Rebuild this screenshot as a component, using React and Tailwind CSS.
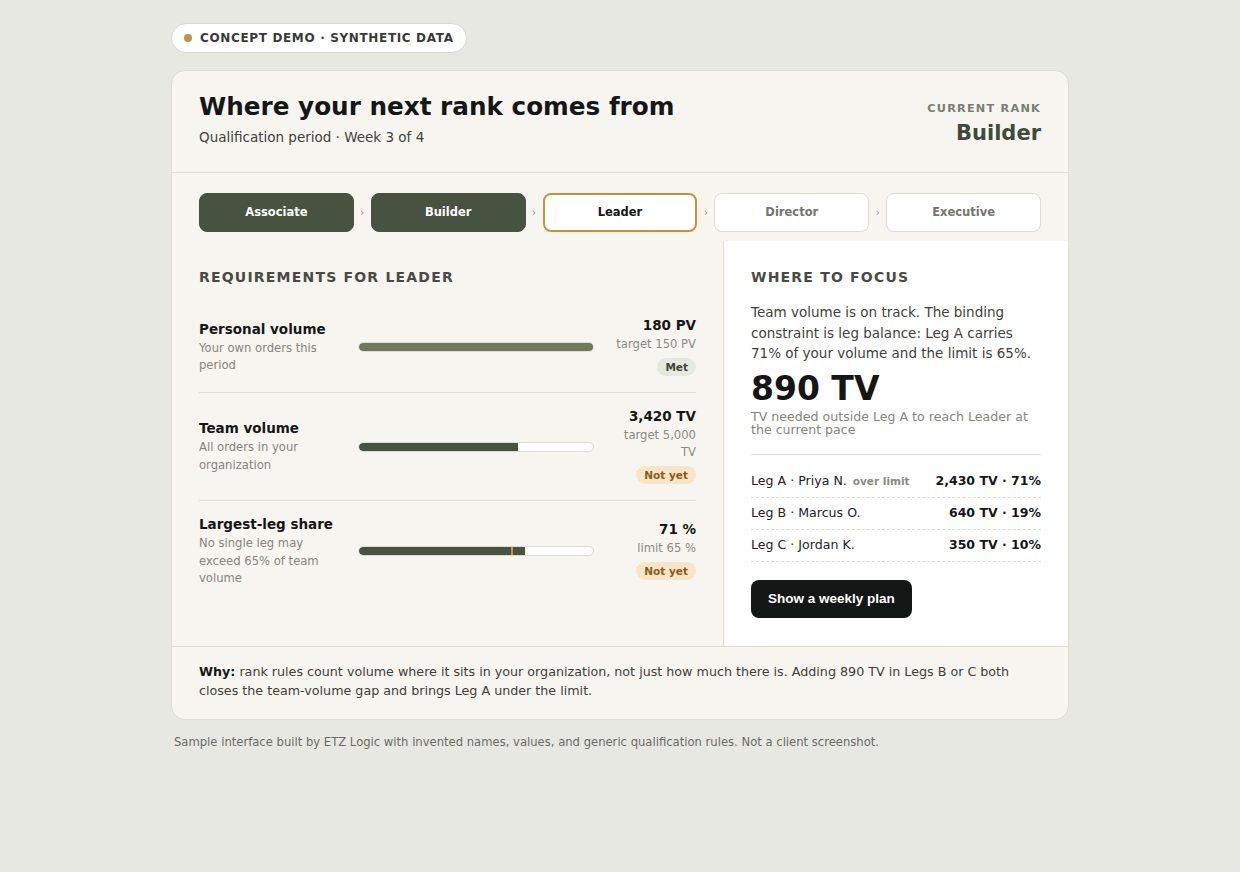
import React from "react";

const F = { fontFamily: '"DejaVu Sans", Verdana, sans-serif' };

function Chevron() {
  return (
    <div className="w-[17px] flex items-center justify-center text-[10px] text-[#8a8a82]">›</div>
  );
}

function Pill({ label, kind }) {
  const cls =
    kind === "done"
      ? "bg-[#485241] text-white border-[#485241]"
      : kind === "current"
      ? "bg-white text-[#151716] border-[#c8913a] border-2"
      : "bg-white text-[#75756d] border-[#dcdcd4]";
  return (
    <div className={`w-[155px] h-[39px] rounded-lg border flex items-center justify-center text-[11.5px] font-bold ${cls}`}>
      {label}
    </div>
  );
}

function Badge({ met }) {
  return met ? (
    <span className="inline-block rounded-full bg-[#e5e8df] text-[#3d4636] text-[10.5px] font-bold px-2 leading-[18px]">Met</span>
  ) : (
    <span className="inline-block rounded-full bg-[#f6e5c6] text-[#8a5a1a] text-[10.5px] font-bold px-2 leading-[18px]">Not yet</span>
  );
}

function Row({ title, desc, value, sub, met, pct, color, marker, last }) {
  return (
    <div className={`grid grid-cols-[146px_236px_1fr] gap-x-[13px] items-center py-[14px] ${last ? "" : "border-b border-[#e0dfd8]"}`}>
      <div>
        <div className="text-[13.5px] font-bold text-[#151716] leading-[18px]">{title}</div>
        <div className="text-[11.6px] text-[#85857d] leading-[17.5px] mt-[2px]">{desc}</div>
      </div>
      <div className="relative h-[10px] rounded-full bg-white border border-[#dedcd4] overflow-hidden">
        <div className="h-full rounded-l-full" style={{ width: pct + "%", background: color }} />
        {marker ? (
          <div className="absolute top-0 bottom-0 w-[2px] bg-[#c8913a]" style={{ left: marker + "%" }} />
        ) : null}
      </div>
      <div className="text-right">
        <div className="text-[13.5px] font-bold text-[#151716] leading-[18px]">{value}</div>
        <div className="text-[11.6px] text-[#8a8a82] leading-[17px] mt-[2px]">{sub}</div>
        <div className="mt-[1px]"><Badge met={met} /></div>
      </div>
    </div>
  );
}

function Leg({ name, extra, value }) {
  return (
    <div className="flex items-center justify-between h-[32px] border-b border-dashed border-[#dcdcd4]">
      <div className="text-[12.6px] text-[#222]">
        {name}
        {extra ? <span className="ml-[6px] text-[10.5px] font-bold text-[#8a8a82]">{extra}</span> : null}
      </div>
      <div className="text-[12.5px] font-bold text-[#151716]">{value}</div>
    </div>
  );
}

export default function App() {
  return (
    <div className="min-h-screen bg-[#e8e8e3] pt-[23px]" style={F}>
      <div className="w-[898px] mx-auto">
        <div className="inline-flex items-center h-[30px] px-[12px] rounded-full bg-white border border-[#d9d9d2]">
          <span className="w-[8px] h-[8px] rounded-full bg-[#c8913a] mr-[8px]" />
          <span className="text-[12px] font-bold tracking-[0.65px] text-[#3a3a36]">CONCEPT DEMO · SYNTHETIC DATA</span>
        </div>

        <div className="mt-[17px] rounded-[14px] border border-[#dcdcd4] bg-[#f6f5f0] overflow-hidden">
          <div className="flex justify-between items-start px-[27px] pt-[19px] pb-[24px] border-b border-[#dedcd5]">
            <div>
              <div className="text-[24.7px] font-bold text-[#151716] leading-[34px]">Where your next rank comes from</div>
              <div className="text-[13.5px] text-[#3f3f3a] leading-[20px] mt-[3px]">Qualification period · Week 3 of 4</div>
            </div>
            <div className="text-right pt-[11px]">
              <div className="text-[11.3px] font-bold tracking-[1.2px] text-[#7a7d73] leading-[16px]">CURRENT RANK</div>
              <div className="text-[21px] font-bold text-[#3f4a3a] leading-[30px] mt-[1px]">Builder</div>
            </div>
          </div>

          <div className="flex px-[27px] pt-[20px] pb-[9px]">
            <Pill label="Associate" kind="done" />
            <Chevron />
            <Pill label="Builder" kind="done" />
            <Chevron />
            <Pill label="Leader" kind="current" />
            <Chevron />
            <Pill label="Director" kind="todo" />
            <Chevron />
            <Pill label="Executive" kind="todo" />
          </div>

          <div className="grid grid-cols-[551px_1fr]">
            <div className="px-[27px] pt-[28px] pb-[20px]">
              <div className="text-[14px] font-bold tracking-[1.2px] text-[#4a4a44] leading-[17px] mb-[16px]">REQUIREMENTS FOR LEADER</div>
              <Row title="Personal volume" desc="Your own orders this period" value="180 PV" sub="target 150 PV" met pct={100} color="#6f7a5a" />
              <Row title="Team volume" desc="All orders in your organization" value="3,420 TV" sub="target 5,000 TV" pct={68} color="#485241" />
              <Row title="Largest-leg share" desc="No single leg may exceed 65% of team volume" value="71 %" sub="limit 65 %" pct={71} marker={65} color="#485241" last />
            </div>
            <div className="bg-white border-l border-[#dedcd5] px-[27px] pt-[28px] pb-[28px]">
              <div className="text-[14px] font-bold tracking-[1.2px] text-[#4a4a44] leading-[17px]">WHERE TO FOCUS</div>
              <div className="text-[13.5px] text-[#3f3f3a] leading-[20.5px] mt-[16px]">
                Team volume is on track. The binding constraint is leg balance: Leg A carries 71% of your volume and the limit is 65%.
              </div>
              <div className="text-[33px] font-bold text-[#151716] leading-[40px] mt-[5px]">890 TV</div>
              <div className="text-[12.6px] text-[#85857d] leading-[13px] mt-[1.5px]">TV needed outside Leg A to reach Leader at the current pace</div>
              <div className="border-t border-[#dedcd5] mt-[18px] pt-[11px]">
                <Leg name="Leg A · Priya N." extra="over limit" value="2,430 TV · 71%" />
                <Leg name="Leg B · Marcus O." value="640 TV · 19%" />
                <Leg name="Leg C · Jordan K." value="350 TV · 10%" />
              </div>
              <button className="mt-[18px] h-[38px] px-[17px] rounded-lg bg-[#151716] text-white text-[13.5px] font-bold" style={{ fontFamily: '"Liberation Sans", Arial, sans-serif' }}>
                Show a weekly plan
              </button>
            </div>
          </div>

          <div className="border-t border-[#dedcd5] px-[27px] pt-[15px] pb-[19px] text-[12.7px] leading-[19px] text-[#3f3f3a]">
            <span className="font-bold text-[#151716]">Why:</span> rank rules count volume where it sits in your organization, not just how much there is. Adding 890 TV in Legs B or C both closes the team-volume gap and brings Leg A under the limit.
          </div>
        </div>

        <div className="mt-[14px] px-[3px] text-[11.6px] leading-[17px] text-[#6b6b66]">
          Sample interface built by ETZ Logic with invented names, values, and generic qualification rules. Not a client screenshot.
        </div>
      </div>
    </div>
  );
}
